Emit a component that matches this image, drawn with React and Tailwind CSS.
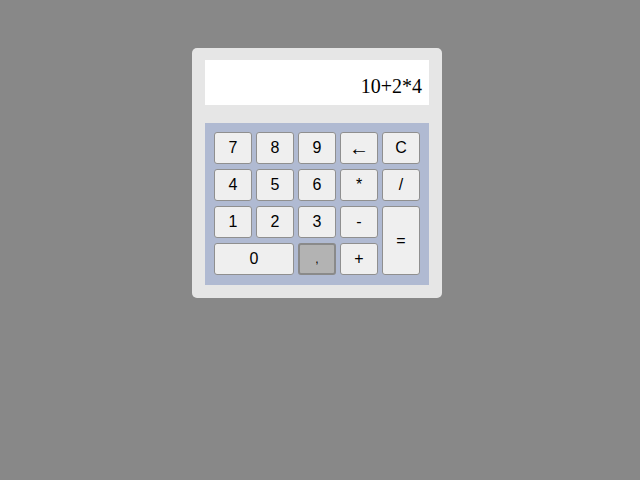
import React from "react";

const btn = "flex items-center justify-center rounded-[3px] border border-[#8f8f8f] bg-[#efefef] text-[16px] text-black";

export default function App() {
  return (
    <div className="w-[640px] h-[480px] bg-[#888888] pt-[48px]" style={{ fontFamily: '"Liberation Sans", Arial, sans-serif' }}>
      <div className="ml-[192px] w-[250px] h-[250px] rounded-[5px] bg-[#e6e6e6] pt-[12px] px-[13px]">
        <div className="h-[45px] bg-white flex items-center justify-end pr-[7px] pt-[7px] text-[20px] text-black" style={{ fontFamily: '"Liberation Serif", "Times New Roman", serif' }}>
          10+2*4
        </div>
        <div className="mt-[18px] h-[162px] bg-[#b0bad2] pt-[9px] pl-[9px]">
          <div className="grid grid-cols-[38px_38px_38px_38px_38px] grid-rows-[32px_32px_32px_32px] gap-x-[4px] gap-y-[5px]">
            <div className={btn}>7</div>
            <div className={btn}>8</div>
            <div className={btn}>9</div>
            <div className={btn + " text-[20px]"}>←</div>
            <div className={btn}>C</div>
            <div className={btn}>4</div>
            <div className={btn}>5</div>
            <div className={btn}>6</div>
            <div className={btn + " text-[14px]"}>*</div>
            <div className={btn}>/</div>
            <div className={btn}>1</div>
            <div className={btn}>2</div>
            <div className={btn}>3</div>
            <div className={btn}>-</div>
            <div className={btn + " row-span-2"}>=</div>
            <div className={btn + " col-span-2"}>0</div>
            <div className="flex items-center justify-center rounded-[3px] border-2 border-[#8a8a8a] bg-[#b3b3b3] text-[12px] text-black">,</div>
            <div className={btn}>+</div>
          </div>
        </div>
      </div>
    </div>
  );
}
